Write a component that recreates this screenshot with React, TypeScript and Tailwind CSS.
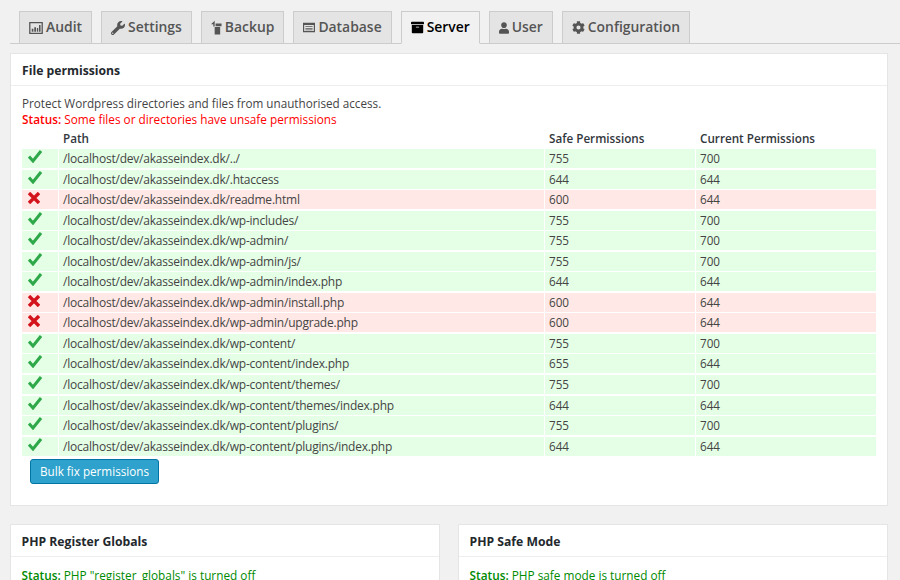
import { FaArchive, FaCog, FaUser, FaWrench } from "react-icons/fa";
import type { ReactNode } from "react";

function AuditIcon() {
  return (
    <svg viewBox="0 0 16 14" className="h-[12px] w-[14px]" fill="currentColor">
      <path d="M0 0h16v14H0zM1.5 1.5v11h13v-11z" fillRule="evenodd" />
      <path d="M3 8h2v3.5H3zM6 6h2v5.5H6zM9 7h1.6v4.5H9zM11.5 3.5h1.8v8h-1.8z" />
    </svg>
  );
}

function BackupIcon() {
  return (
    <svg viewBox="0 0 12 15" className="h-[15px] w-[11px]" fill="currentColor">
      <path d="M4 0 0 4h2.5v2.5H4zM5 3h6.5v3H5zM4 7h6v8H4z" />
    </svg>
  );
}

function DatabaseIcon() {
  return (
    <svg viewBox="0 0 15 12" className="h-[11px] w-[12px]" fill="currentColor">
      <path d="M0 0h15v12H0zM1.5 3v7.5h12V3z" fillRule="evenodd" />
      <path d="M3 4.5h9v1H3zM3 6.5h9v1H3zM3 8.5h9v1H3z" />
    </svg>
  );
}

function CheckMark() {
  return (
    <svg viewBox="0 0 14 13" className="h-[13px] w-[14px]" fill="none" stroke="#2fa84a" strokeWidth="3">
      <path d="M1 6.5 5 11 13 1" />
    </svg>
  );
}

function CrossMark() {
  return (
    <svg viewBox="0 0 12 12" className="mt-[1px] h-[12px] w-[12px]" fill="none" stroke="#d4141c" strokeWidth="3.4">
      <path d="M1 1 11 11M11 1 1 11" />
    </svg>
  );
}

const tabs: { label: string; icon: ReactNode; active?: boolean }[] = [
  { label: "Audit", icon: <AuditIcon /> },
  { label: "Settings", icon: <FaWrench className="h-[14px] w-[14px]" /> },
  { label: "Backup", icon: <BackupIcon /> },
  { label: "Database", icon: <DatabaseIcon /> },
  { label: "Server", icon: <FaArchive className="h-[13px] w-[13px] text-black" />, active: true },
  { label: "User", icon: <FaUser className="h-[12px] w-[10px]" /> },
  { label: "Configuration", icon: <FaCog className="h-[13px] w-[13px]" /> },
];

const rows: [string, string, string, boolean][] = [
  ["/localhost/dev/akasseindex.dk/../", "755", "700", true],
  ["/localhost/dev/akasseindex.dk/.htaccess", "644", "644", true],
  ["/localhost/dev/akasseindex.dk/readme.html", "600", "644", false],
  ["/localhost/dev/akasseindex.dk/wp-includes/", "755", "700", true],
  ["/localhost/dev/akasseindex.dk/wp-admin/", "755", "700", true],
  ["/localhost/dev/akasseindex.dk/wp-admin/js/", "755", "700", true],
  ["/localhost/dev/akasseindex.dk/wp-admin/index.php", "644", "644", true],
  ["/localhost/dev/akasseindex.dk/wp-admin/install.php", "600", "644", false],
  ["/localhost/dev/akasseindex.dk/wp-admin/upgrade.php", "600", "644", false],
  ["/localhost/dev/akasseindex.dk/wp-content/", "755", "700", true],
  ["/localhost/dev/akasseindex.dk/wp-content/index.php", "655", "644", true],
  ["/localhost/dev/akasseindex.dk/wp-content/themes/", "755", "700", true],
  ["/localhost/dev/akasseindex.dk/wp-content/themes/index.php", "644", "644", true],
  ["/localhost/dev/akasseindex.dk/wp-content/plugins/", "755", "700", true],
  ["/localhost/dev/akasseindex.dk/wp-content/plugins/index.php", "644", "644", true],
];

const gridCols = "grid grid-cols-[36px_485px_150px_180px] gap-x-[1px]";

function SmallPanel({ title, status }: { title: string; status: string }) {
  return (
    <section className="h-[80px] flex-1 border border-[#e5e5e5] bg-white">
      <h2 className="h-[32px] border-b border-[#eeeeee] px-[10.5px] text-[12.2px] leading-[33px] font-bold text-[#23282d]">
        {title}
      </h2>
      <p className="px-[10.5px] pt-[9px] text-[11.8px] leading-[18px] text-[#008a00]">
        <b className="font-semibold">Status:</b> {status}
      </p>
    </section>
  );
}

export default function App() {
  return (
    <div className="h-[580px] w-[900px] overflow-hidden bg-[#f1f1f1] font-['Open_Sans',sans-serif] text-[11.7px] text-[#444444]">
      <nav className="mt-[11px] ml-[10px] flex h-[33px] gap-[9px] border-b border-[#cccccc] pl-[9px]">
        {tabs.map((tab) => (
          <div
            key={tab.label}
            className={`flex h-[33px] items-center gap-[3px] border border-[#cccccc] px-[9px] text-[13.9px] font-semibold ${
              tab.active
                ? "border-b-[#f1f1f1] bg-[#f1f1f1] text-black"
                : "bg-[#e4e4e4] text-[#555555]"
            }`}
          >
            {tab.icon}
            {tab.label}
          </div>
        ))}
      </nav>

      <div className="px-[10px] pr-[12px] pt-[9px]">
        <section className="h-[453px] border border-[#e5e5e5] bg-white">
          <h2 className="h-[32px] border-b border-[#eeeeee] px-[11px] text-[12.2px] leading-[33px] font-bold text-[#23282d]">
            File permissions
          </h2>
          <div className="px-[11px] pt-[9px]">
            <p className="leading-[17px]">Protect Wordpress directories and files from unauthorised access.</p>
            <p className="-mt-[1px] text-[11.8px] leading-[17px] text-[#ff0000]">
              <b className="font-semibold">Status:</b> Some files or directories have unsafe permissions
            </p>
            <div className={`${gridCols} mt-[1px] h-[20px] font-semibold leading-[19px] text-[#32373c]`}>
              <span />
              <span className="pl-[4px]">Path</span>
              <span className="pl-[4px]">Safe Permissions</span>
              <span className="pl-[4px]">Current Permissions</span>
            </div>
            <div className="flex flex-col gap-y-[2px]">
              {rows.map(([path, safe, current, ok]) => {
                const bg = ok ? "bg-[#e5ffe7]" : "bg-[#ffe8e5]";
                return (
                  <div key={path} className={`${gridCols} h-[18.55px] leading-[18.5px]`}>
                    <span className={`${bg} flex justify-start pt-[1px] pl-[6px]`}>
                      {ok ? <CheckMark /> : <CrossMark />}
                    </span>
                    <span className={`${bg} pl-[4px] text-[12px] leading-[19px] tracking-[-0.22px]`}>{path}</span>
                    <span className={`${bg} pl-[4px]`}>{safe}</span>
                    <span className={`${bg} pl-[4px]`}>{current}</span>
                  </div>
                );
              })}
            </div>
            <button className="mt-[3.5px] ml-[8px] h-[25px] rounded-[3px] border border-[#0074a2] bg-[#2ea2cc] px-[9px] text-[11.7px] leading-[22px] text-[#ffffff]">
              Bulk fix permissions
            </button>
          </div>
        </section>

        <div className="mt-[18px] flex gap-[18px]">
          <SmallPanel title="PHP Register Globals" status={'PHP "register_globals" is turned off'} />
          <SmallPanel title="PHP Safe Mode" status="PHP safe mode is turned off" />
        </div>
      </div>
    </div>
  );
}
